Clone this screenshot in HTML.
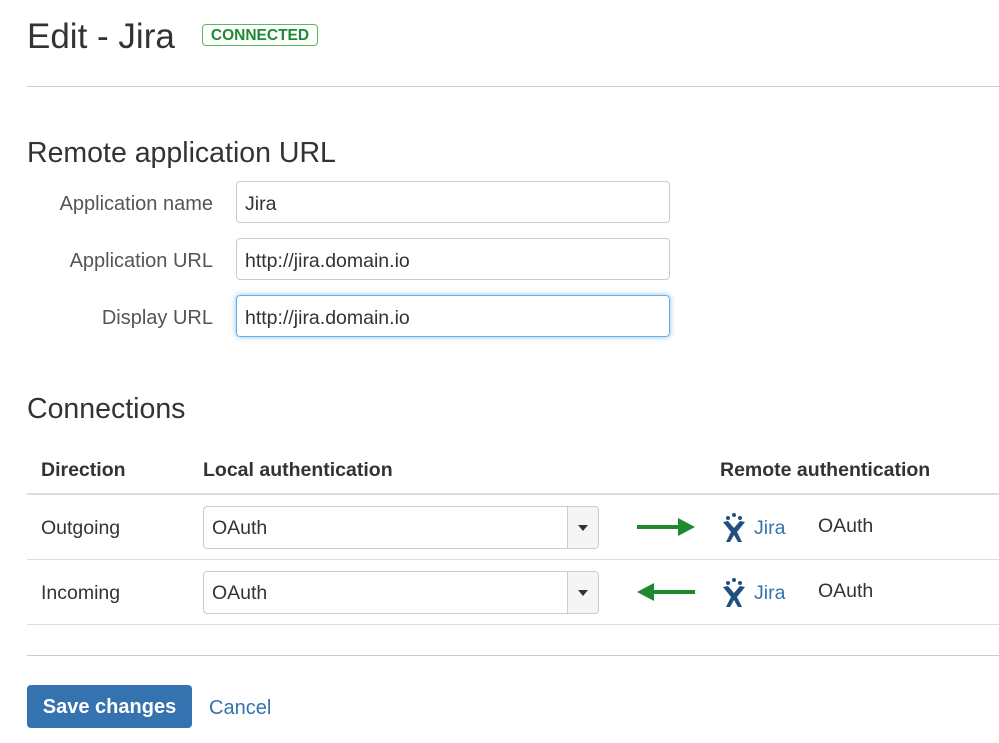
<!DOCTYPE html><html><head><style>
body{margin:0;width:999px;height:743px;background:#fff;font-family:"Liberation Sans",Arial,sans-serif;color:#333;position:relative;overflow:hidden}
.a{position:absolute;white-space:nowrap}
.inp{position:absolute;left:236px;border:1px solid #ccc;border-radius:4px;font-size:19.5px;line-height:44px;padding-left:8px;box-sizing:border-box;width:434px;height:42px}
.lbl{position:absolute;right:786px;font-size:20px;color:#555}
.sel{position:absolute;left:203px;width:396px;height:43px;border:1px solid #ccc;border-radius:4px;box-sizing:border-box;font-size:19.5px;line-height:42px;padding-left:8px}
.sel:after{content:"";position:absolute;right:0;top:0;width:30px;height:41px;border-left:1px solid #ccc;background:#f5f5f5;border-radius:0 4px 4px 0}
.sel i{position:absolute;right:10px;top:18px;border-left:5px solid transparent;border-right:5px solid transparent;border-top:6px solid #333;z-index:1}
.line{position:absolute;left:27px;right:0;height:1px;background:#ccc}
.h{font-size:19.5px;font-weight:bold}
</style></head><body>
<div class="a" style="left:27px;top:17px;font-size:35px;color:#333">Edit - Jira</div>
<div class="a" style="left:202px;top:24px;width:114px;height:20px;border:1.5px solid #5cb85c;border-radius:4px;color:#1e8a2f;font-weight:bold;font-size:15.5px;line-height:21px;text-align:center">CONNECTED</div>
<div class="line" style="top:86px"></div>
<div class="a" style="left:27px;top:137px;font-size:28.5px">Remote application URL</div>
<div class="lbl" style="top:193px">Application name</div>
<div class="lbl" style="top:250px">Application URL</div>
<div class="lbl" style="top:307px">Display URL</div>
<div class="inp" style="top:181px">Jira</div>
<div class="inp" style="top:238px">http://jira.domain.io</div>
<div class="inp" style="top:295px;border-color:#66afe9;box-shadow:0 0 6px rgba(102,175,233,.8)">http://jira.domain.io</div>
<div class="a" style="left:27px;top:393px;font-size:28.5px">Connections</div>
<div class="a h" style="left:41px;top:459px">Direction</div>
<div class="a h" style="left:203px;top:459px">Local authentication</div>
<div class="a h" style="left:720px;top:459px">Remote authentication</div>
<div class="line" style="top:493px;height:2px;background:#ddd"></div>
<div class="line" style="top:559px;background:#ddd"></div>
<div class="line" style="top:624px;background:#ddd"></div>
<div class="line" style="top:655px"></div>
<div class="a" style="left:41px;top:517px;font-size:19.5px">Outgoing</div>
<div class="a" style="left:41px;top:582px;font-size:19.5px">Incoming</div>
<div class="sel" style="top:506px">OAuth<i></i></div>
<div class="sel" style="top:571px">OAuth<i></i></div>
<svg class="a" style="left:636px;top:516px" width="60" height="22"><path d="M1 11H44" stroke="#1e8a2f" stroke-width="4"/><path d="M42 2L59 11L42 20Z" fill="#1e8a2f"/></svg>
<svg class="a" style="left:636px;top:581px" width="60" height="22"><path d="M16 11H59" stroke="#1e8a2f" stroke-width="4"/><path d="M18 2L1 11L18 20Z" fill="#1e8a2f"/></svg>
<svg class="a" style="left:722px;top:513px" width="24" height="30"><g fill="#205081"><circle cx="12" cy="2" r="2"/><circle cx="6" cy="5" r="2"/><circle cx="18" cy="5" r="2"/><path d="M1 9L6 8L12 15L18 8L23 9L15 19L20 29L16 29L12 22L8 29L4 29L9 19Z"/></g></svg>
<svg class="a" style="left:722px;top:578px" width="24" height="30"><g fill="#205081"><circle cx="12" cy="2" r="2"/><circle cx="6" cy="5" r="2"/><circle cx="18" cy="5" r="2"/><path d="M1 9L6 8L12 15L18 8L23 9L15 19L20 29L16 29L12 22L8 29L4 29L9 19Z"/></g></svg>
<div class="a" style="left:754px;top:517px;font-size:19.5px;color:#3572b0">Jira</div>
<div class="a" style="left:754px;top:582px;font-size:19.5px;color:#3572b0">Jira</div>
<div class="a" style="left:818px;top:515px;font-size:19.5px">OAuth</div>
<div class="a" style="left:818px;top:580px;font-size:19.5px">OAuth</div>
<div class="a" style="left:27px;top:685px;width:165px;height:43px;background:#3572b0;border-radius:4px;color:#fff;font-weight:bold;font-size:20px;line-height:45px;text-align:center">Save changes</div>
<div class="a" style="left:209px;top:697px;font-size:20px;color:#3572b0">Cancel</div>
</body></html>
